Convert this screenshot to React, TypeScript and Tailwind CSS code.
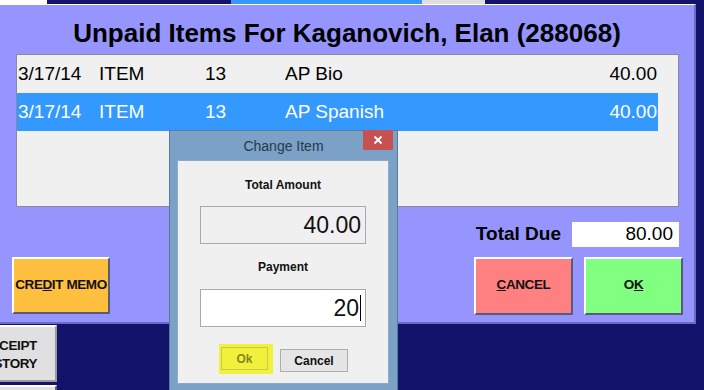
import React from "react";

// Rows of the unpaid items list
const items = [
  { date: "3/17/14", type: "ITEM", qty: "13", name: "AP Bio", amount: "40.00", selected: false },
  { date: "3/17/14", type: "ITEM", qty: "13", name: "AP Spanish", amount: "40.00", selected: true },
];

const BigButton = ({
  children,
  className,
}: {
  children: React.ReactNode;
  className: string;
}) => (
  <div
    className={`flex items-center justify-center whitespace-nowrap border-2 border-t-white border-l-white border-r-[#5a5a7a] border-b-[#5a5a7a] text-[13.5px] font-bold tracking-[-0.4px] text-[#111] ${className}`}
  >
    {children}
  </div>
);

const ChangeItemDialog = () => (
  <div className="absolute left-[169px] top-[130px] h-[270px] w-[229px] border border-[#5b7b9b] bg-[#7ba1c6]">
    {/* Title bar */}
    <div className="relative flex h-[29px] items-center justify-center pt-[1px] text-[14px] text-[#27394b]">
      Change Item
      <div className="absolute right-[4px] top-[-1px] flex h-[20px] w-[30px] items-center justify-center bg-[#c75050]">
        <svg width="10" height="10" viewBox="0 0 10 10">
          <path d="M1.5 1.5 L8.5 8.5 M8.5 1.5 L1.5 8.5" stroke="white" strokeWidth="2" />
        </svg>
      </div>
    </div>

    {/* Body */}
    <div className="ml-[7px] flex h-[224px] w-[212px] flex-col items-center border border-[#8ca9c6] bg-[#f0f0f0]">
      <div className="mt-[17px] text-[12px] font-bold leading-[14px] text-[#111]">Total Amount</div>
      <div className="mt-[14px] flex h-[38px] w-[166px] items-center justify-end border border-[#a9a9a9] bg-[#f0f0f0] pr-[4px] text-[23px] text-[#111]">
        40.00
      </div>
      <div className="mt-[16px] text-[12px] font-bold leading-[14px] text-[#111]">Payment</div>
      <div className="mt-[15px] flex h-[38px] w-[166px] items-center justify-end border border-[#a9a9a9] bg-white pr-[4px] text-[23px] text-[#111]">
        20
        <span className="ml-[1px] h-[26px] w-[1px] bg-black" />
      </div>
      <div className="mt-[17px] flex w-full items-center">
        <div className="ml-[41px] flex h-[30px] w-[54px] items-start bg-[#f1f13c] pl-[2px] pt-[3px]">
          <div className="flex h-[23px] w-[47px] items-center justify-center border border-[#c9c94e] text-[12px] font-bold text-[#86861f]">
            Ok
          </div>
        </div>
        <div className="ml-[7px] mt-[3px] flex h-[23px] w-[68px] items-center justify-center border border-[#adadad] bg-[#e5e5e5] text-[12px] font-bold text-[#111]">
          Cancel
        </div>
      </div>
    </div>
  </div>
);

const App = () => {
  return (
    <div className="relative h-[390px] w-[704px] overflow-hidden bg-[#13136b] font-['Liberation_Sans',Arial,sans-serif]">
      {/* Strip of the window behind */}
      <div className="flex h-[4px]">
        <div className="w-[47px] bg-white" />
        <div className="w-[184px] bg-[#13136b]" />
        <div className="w-[191px] bg-[#3399ff]" />
        <div className="w-[63px] bg-[#e0e0e0]" />
      </div>

      {/* Main panel */}
      <div className="h-[320px] w-[696px] border-t border-r-2 border-b-2 border-t-white border-r-[#6c6cc4] border-b-[#6c6cc4] bg-[#9595fd]">
        <div className="flex h-[49px] items-center justify-center pt-[7px] text-[26px] font-bold text-black">
          Unpaid Items For Kaganovich, Elan (288068)
        </div>

        {/* Items list */}
        <div className="ml-[16px] h-[153px] w-[663px] border border-[#8a8a9a] bg-[#f0f0f0] text-[19px]">
          {items.map((item, i) => (
            <div
              key={i}
              className={`flex h-[38px] w-[641px] items-center pl-[1px] pr-[1px] ${
                item.selected ? "bg-[#3399ff] text-white" : "text-black"
              }`}
            >
              <span className="w-[81px]">{item.date}</span>
              <span className="w-[106px]">{item.type}</span>
              <span className="w-[80px]">{item.qty}</span>
              <span className="flex-1">{item.name}</span>
              <span>{item.amount}</span>
            </div>
          ))}
        </div>

        {/* Totals */}
        <div className="mr-[15px] mt-[13px] flex items-center justify-end">
          <span className="text-[19px] font-bold text-black">Total Due</span>
          <div className="ml-[11px] flex h-[25px] w-[107px] items-center justify-end bg-white pr-[6px] text-[19px] text-black">
            80.00
          </div>
        </div>

        <div className="mt-[8px] flex items-start">
          <BigButton className="ml-[12px] h-[57px] w-[98px] bg-[#ffc040]">
            <span>
              CRE<span className="underline">D</span>IT MEMO
            </span>
          </BigButton>
          <BigButton className="ml-auto h-[58px] w-[99px] bg-[#ff8080]">
            <span>
              <span className="underline">C</span>ANCEL
            </span>
          </BigButton>
          <BigButton className="ml-[11px] mr-[11px] h-[58px] w-[99px] bg-[#80ff80]">
            <span>
              O<span className="underline">K</span>
            </span>
          </BigButton>
        </div>
      </div>

      {/* Buttons of the screen behind */}
      <div className="ml-[-39px] mt-[1px] flex flex-col gap-[3px]">
        <BigButton className="h-[57px] w-[96px] flex-col border-[#f4f4f4] border-r-[#9a9a9a] border-b-[#9a9a9a] bg-[#e0e0e0] pt-[3px] leading-[18px]">
          <span>RECEIPT</span>
          <span>HISTORY</span>
        </BigButton>
        <BigButton className="h-[57px] w-[96px] border-[#f4f4f4] bg-[#e0e0e0]">
          <span />
        </BigButton>
      </div>

      <ChangeItemDialog />
    </div>
  );
};

export default App;
